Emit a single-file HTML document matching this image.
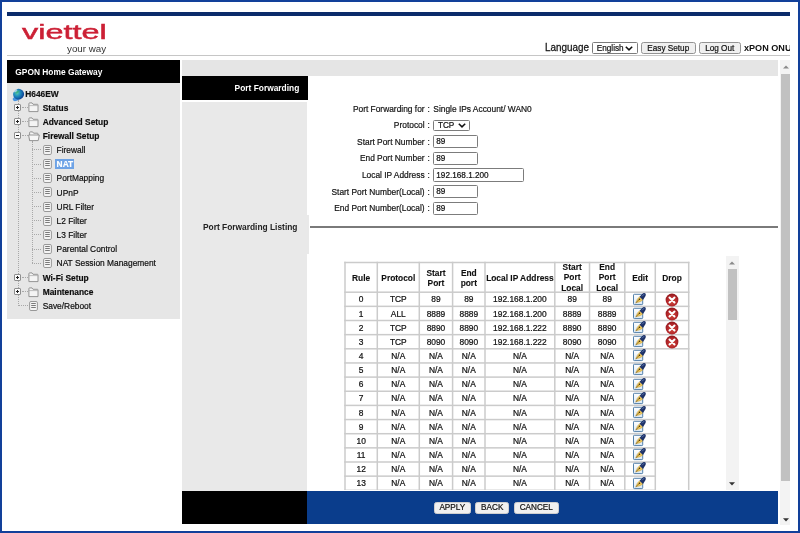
<!DOCTYPE html>
<html><head><meta charset="utf-8"><title>GPON Home Gateway</title>
<style>
html,body{margin:0;padding:0;}
body{width:800px;height:533px;position:relative;overflow:hidden;background:#fff;font-family:"Liberation Sans",sans-serif;color:#1a1a1a;}
.abs{position:absolute;}
.frame{position:absolute;left:0;top:0;width:796px;height:529px;border:2px solid #12409a;border-top-width:2px;pointer-events:none;z-index:50;}
.t{position:absolute;white-space:nowrap;line-height:1;}
.b{font-weight:bold;}
.tree .t{font-size:8.4px;-webkit-text-stroke:0.18px currentColor;transform:scaleY(1.06);}
.btn{position:absolute;box-sizing:border-box;border:1px solid #939393;border-radius:2.5px;background:#f0f0f0;font-size:8.2px;text-align:center;color:#111;white-space:nowrap;-webkit-text-stroke:0.2px #111;}
.inp{position:absolute;box-sizing:border-box;border:1px solid #7c7c7c;border-radius:1.5px;background:#fff;font-size:8.2px;color:#111;padding-left:2.5px;white-space:nowrap;-webkit-text-stroke:0.2px #111;}
.lbl{position:absolute;font-size:8.4px;white-space:nowrap;text-align:right;color:#111;line-height:10px;-webkit-text-stroke:0.18px #111;transform:scaleY(1.12);}
.cell{position:absolute;font-size:8.4px;text-align:center;white-space:nowrap;color:#111;line-height:10px;-webkit-text-stroke:0.22px #111;transform:scaleY(1.1);}
.hl{position:absolute;background:#d0d0d0;height:1.5px;}
.vl{position:absolute;background:#d0d0d0;width:1.5px;}
</style></head><body><div id="root" style="position:absolute;left:0;top:0;width:800px;height:533px;will-change:transform;">

<svg style="position:absolute;left:0;top:0" width="0" height="0"><defs><linearGradient id="eg" x1="0" y1="0" x2="0" y2="1"><stop offset="0" stop-color="#ffffff"/><stop offset="1" stop-color="#d9e8f5"/></linearGradient><radialGradient id="dg" cx="50%" cy="60%" r="55%"><stop offset="0" stop-color="#cf4a3a"/><stop offset="0.7" stop-color="#b3262a"/><stop offset="1" stop-color="#951a1e"/></radialGradient><radialGradient id="gl" cx="42%" cy="35%" r="65%"><stop offset="0" stop-color="#59c9b4"/><stop offset="0.5" stop-color="#1c86bd"/><stop offset="1" stop-color="#0d3f93"/></radialGradient></defs></svg>
<div class="abs" style="left:7px;top:12px;width:783px;height:3.5px;background:#0b2b6b"></div>
<div class="t" style="left:22px;top:21.7px;font-size:20.4px;color:#cc2035;-webkit-text-stroke:0.45px #cc2035;transform-origin:0 0;transform:scaleX(1.59);letter-spacing:0px;">viettel</div>
<div class="t" style="left:66.5px;top:44.7px;font-size:8.6px;color:#333;transform-origin:0 0;transform:scaleX(1.14);">your way</div>
<div class="abs" style="left:0;top:0;width:790px;height:60px;overflow:hidden">
<div class="t" style="left:545px;top:43.0px;font-size:9.9px;color:#161616;-webkit-text-stroke:0.25px #161616;transform:scaleY(1.1)">Language</div>
<div class="inp" style="left:592px;top:42.4px;width:45.5px;height:11.2px;line-height:9.2px;padding-left:3.8px;font-size:8.2px"><span style="position:relative;display:inline-block;transform:scaleY(1.12);top:0.7px">English</span><svg style="position:absolute;right:3.3px;top:2.3px" width="8" height="5" viewBox="0 0 8 5"><path d="M0.8 0.8 L4 3.9 L7.2 0.8" fill="none" stroke="#111" stroke-width="1.5"/></svg></div>
<div class="btn" style="left:641px;top:42.4px;width:54.5px;height:11.4px;line-height:9.4px;font-size:8.2px;"><span style="position:relative;display:inline-block;transform:scaleY(1.12);top:0.7px">Easy Setup</span></div>
<div class="btn" style="left:698.5px;top:42.4px;width:42.5px;height:11.4px;line-height:9.4px;font-size:8.2px;"><span style="position:relative;display:inline-block;transform:scaleY(1.12);top:0.7px">Log Out</span></div>
<div class="t b" style="left:744px;top:43.1px;font-size:9.9px;transform-origin:0 50%;transform:scaleX(0.92);color:#111">xPON ONU</div>
</div>
<div class="abs" style="left:7px;top:54.7px;width:783px;height:1px;background:#c6c6c6"></div>
<div class="abs" style="left:7px;top:60px;width:173px;height:23.3px;background:#000"></div>
<div class="t b" style="left:15.3px;top:67.5px;font-size:8.4px;color:#fff">GPON Home Gateway</div>
<div class="abs tree" style="left:7px;top:83.3px;width:173px;height:235.3px;background:#e6e6e6"></div>
<div class="tree">
<svg class="abs" style="left:12px;top:87.5px" width="13" height="14" viewBox="0 0 13 14"><ellipse cx="4.2" cy="10.6" rx="3.6" ry="2.2" fill="#2f86df" opacity="0.85" transform="rotate(-20 4.2 10.6)"/><ellipse cx="6.6" cy="6.2" rx="5.5" ry="5.3" fill="url(#gl)" transform="rotate(-25 6.6 6.2)"/><path d="M3.2 4.6 Q5 2.2 8 2.6 Q7.2 4.4 5.6 4.9 Q4.2 6.2 3.2 4.6Z" fill="#3bb27a" opacity="0.75"/><ellipse cx="3.6" cy="2.8" rx="2" ry="1.1" fill="#fff" opacity="0.55" transform="rotate(-35 3.6 2.8)"/></svg>
<div class="t b" style="left:25.2px;top:89.9px;color:#111">H646EW</div>
<div class="abs" style="left:17.6px;top:100px;width:0;height:205.77999999999997px;border-left:1px dotted #a8a8a8"></div>
<div class="abs" style="left:31.700000000000003px;top:140.74px;width:0;height:122.52999999999997px;border-left:1px dotted #a8a8a8"></div>
<div class="abs" style="left:21.5px;top:106.9px;height:0;width:6.5px;border-top:1px dotted #a8a8a8"></div>
<svg class="abs" style="left:14px;top:104px" width="7" height="7" viewBox="0 0 7 7"><rect x="0.5" y="0.5" width="6" height="6" rx="0.5" fill="#fbfbfb" stroke="#8f8f8f" stroke-width="1"/><path d="M2 3.5 H5" stroke="#222" stroke-width="1"/><path d="M3.5 2 V5" stroke="#222" stroke-width="1"/></svg>
<svg class="abs" style="left:27.5px;top:102.4px" width="11" height="11" viewBox="0 0 11 11"><path d="M0.9 9.6 V1.6 Q0.9 0.9 1.6 0.9 H4 L5 2.3 H9.4 Q10 2.3 10 3 V9.6 Z" fill="#f4f4f4" stroke="#8a8a8a" stroke-width="0.9"/><path d="M0.9 3.6 H10" stroke="#a5a5a5" stroke-width="0.7"/></svg>
<div class="t b" style="left:42.7px;top:103.60000000000001px;color:#0c0c0c">Status</div>
<div class="abs" style="left:21.5px;top:121.07000000000001px;height:0;width:6.5px;border-top:1px dotted #a8a8a8"></div>
<svg class="abs" style="left:14px;top:118px" width="7" height="7" viewBox="0 0 7 7"><rect x="0.5" y="0.5" width="6" height="6" rx="0.5" fill="#fbfbfb" stroke="#8f8f8f" stroke-width="1"/><path d="M2 3.5 H5" stroke="#222" stroke-width="1"/><path d="M3.5 2 V5" stroke="#222" stroke-width="1"/></svg>
<svg class="abs" style="left:27.5px;top:116.57000000000001px" width="11" height="11" viewBox="0 0 11 11"><path d="M0.9 9.6 V1.6 Q0.9 0.9 1.6 0.9 H4 L5 2.3 H9.4 Q10 2.3 10 3 V9.6 Z" fill="#f4f4f4" stroke="#8a8a8a" stroke-width="0.9"/><path d="M0.9 3.6 H10" stroke="#a5a5a5" stroke-width="0.7"/></svg>
<div class="t b" style="left:42.7px;top:117.77000000000001px;color:#0c0c0c">Advanced Setup</div>
<div class="abs" style="left:21.5px;top:135.24px;height:0;width:6.5px;border-top:1px dotted #a8a8a8"></div>
<svg class="abs" style="left:14px;top:132px" width="7" height="7" viewBox="0 0 7 7"><rect x="0.5" y="0.5" width="6" height="6" rx="0.5" fill="#fbfbfb" stroke="#8f8f8f" stroke-width="1"/><path d="M2 3.5 H5" stroke="#222" stroke-width="1"/></svg>
<svg class="abs" style="left:27.5px;top:130.74px" width="12" height="11" viewBox="0 0 12 11"><path d="M1.6 9.6 V1.6 Q1.6 0.9 2.3 0.9 H4.6 L5.6 2.2 H9.4 Q10 2.2 10 2.9 V4" fill="#f4f4f4" stroke="#8a8a8a" stroke-width="0.9"/><path d="M0.6 4 H11.3 L10.2 9.6 H1.6 Z" fill="#f7f7f7" stroke="#8a8a8a" stroke-width="0.9"/></svg>
<div class="t b" style="left:42.7px;top:131.94px;color:#0c0c0c">Firewall Setup</div>
<div class="abs" style="left:32.2px;top:149.41px;height:0;width:9.299999999999997px;border-top:1px dotted #a8a8a8"></div>
<svg class="abs" style="left:42.5px;top:145px" width="9" height="10" viewBox="0 0 9 10"><rect x="0.6" y="0.5" width="7.8" height="9" rx="1.3" fill="#f4f4f4" stroke="#8e8e8e" stroke-width="0.9"/><path d="M2.2 2.5 H6.8 M2.2 4.5 H6.8 M2.2 6.5 H6.8" stroke="#7a7a7a" stroke-width="1"/></svg>
<div class="t" style="left:56.6px;top:146.10999999999999px;color:#0c0c0c">Firewall</div>
<div class="abs" style="left:32.2px;top:163.58px;height:0;width:9.299999999999997px;border-top:1px dotted #a8a8a8"></div>
<svg class="abs" style="left:42.5px;top:159px" width="9" height="10" viewBox="0 0 9 10"><rect x="0.6" y="0.5" width="7.8" height="9" rx="1.3" fill="#f4f4f4" stroke="#8e8e8e" stroke-width="0.9"/><path d="M2.2 2.5 H6.8 M2.2 4.5 H6.8 M2.2 6.5 H6.8" stroke="#7a7a7a" stroke-width="1"/></svg>
<div class="abs" style="left:54.7px;top:159.08px;width:19.4px;height:10px;background:#6ea3e6"></div>
<div class="t b" style="left:56.6px;top:160.28px;color:#fff">NAT</div>
<div class="abs" style="left:32.2px;top:177.75px;height:0;width:9.299999999999997px;border-top:1px dotted #a8a8a8"></div>
<svg class="abs" style="left:42.5px;top:173px" width="9" height="10" viewBox="0 0 9 10"><rect x="0.6" y="0.5" width="7.8" height="9" rx="1.3" fill="#f4f4f4" stroke="#8e8e8e" stroke-width="0.9"/><path d="M2.2 2.5 H6.8 M2.2 4.5 H6.8 M2.2 6.5 H6.8" stroke="#7a7a7a" stroke-width="1"/></svg>
<div class="t" style="left:56.6px;top:174.45px;color:#0c0c0c">PortMapping</div>
<div class="abs" style="left:32.2px;top:191.92000000000002px;height:0;width:9.299999999999997px;border-top:1px dotted #a8a8a8"></div>
<svg class="abs" style="left:42.5px;top:187px" width="9" height="10" viewBox="0 0 9 10"><rect x="0.6" y="0.5" width="7.8" height="9" rx="1.3" fill="#f4f4f4" stroke="#8e8e8e" stroke-width="0.9"/><path d="M2.2 2.5 H6.8 M2.2 4.5 H6.8 M2.2 6.5 H6.8" stroke="#7a7a7a" stroke-width="1"/></svg>
<div class="t" style="left:56.6px;top:188.62px;color:#0c0c0c">UPnP</div>
<div class="abs" style="left:32.2px;top:206.09px;height:0;width:9.299999999999997px;border-top:1px dotted #a8a8a8"></div>
<svg class="abs" style="left:42.5px;top:202px" width="9" height="10" viewBox="0 0 9 10"><rect x="0.6" y="0.5" width="7.8" height="9" rx="1.3" fill="#f4f4f4" stroke="#8e8e8e" stroke-width="0.9"/><path d="M2.2 2.5 H6.8 M2.2 4.5 H6.8 M2.2 6.5 H6.8" stroke="#7a7a7a" stroke-width="1"/></svg>
<div class="t" style="left:56.6px;top:202.79px;color:#0c0c0c">URL Filter</div>
<div class="abs" style="left:32.2px;top:220.26px;height:0;width:9.299999999999997px;border-top:1px dotted #a8a8a8"></div>
<svg class="abs" style="left:42.5px;top:216px" width="9" height="10" viewBox="0 0 9 10"><rect x="0.6" y="0.5" width="7.8" height="9" rx="1.3" fill="#f4f4f4" stroke="#8e8e8e" stroke-width="0.9"/><path d="M2.2 2.5 H6.8 M2.2 4.5 H6.8 M2.2 6.5 H6.8" stroke="#7a7a7a" stroke-width="1"/></svg>
<div class="t" style="left:56.6px;top:216.95999999999998px;color:#0c0c0c">L2 Filter</div>
<div class="abs" style="left:32.2px;top:234.43px;height:0;width:9.299999999999997px;border-top:1px dotted #a8a8a8"></div>
<svg class="abs" style="left:42.5px;top:230px" width="9" height="10" viewBox="0 0 9 10"><rect x="0.6" y="0.5" width="7.8" height="9" rx="1.3" fill="#f4f4f4" stroke="#8e8e8e" stroke-width="0.9"/><path d="M2.2 2.5 H6.8 M2.2 4.5 H6.8 M2.2 6.5 H6.8" stroke="#7a7a7a" stroke-width="1"/></svg>
<div class="t" style="left:56.6px;top:231.13px;color:#0c0c0c">L3 Filter</div>
<div class="abs" style="left:32.2px;top:248.6px;height:0;width:9.299999999999997px;border-top:1px dotted #a8a8a8"></div>
<svg class="abs" style="left:42.5px;top:244px" width="9" height="10" viewBox="0 0 9 10"><rect x="0.6" y="0.5" width="7.8" height="9" rx="1.3" fill="#f4f4f4" stroke="#8e8e8e" stroke-width="0.9"/><path d="M2.2 2.5 H6.8 M2.2 4.5 H6.8 M2.2 6.5 H6.8" stroke="#7a7a7a" stroke-width="1"/></svg>
<div class="t" style="left:56.6px;top:245.29999999999998px;color:#0c0c0c">Parental Control</div>
<div class="abs" style="left:32.2px;top:262.77px;height:0;width:9.299999999999997px;border-top:1px dotted #a8a8a8"></div>
<svg class="abs" style="left:42.5px;top:258px" width="9" height="10" viewBox="0 0 9 10"><rect x="0.6" y="0.5" width="7.8" height="9" rx="1.3" fill="#f4f4f4" stroke="#8e8e8e" stroke-width="0.9"/><path d="M2.2 2.5 H6.8 M2.2 4.5 H6.8 M2.2 6.5 H6.8" stroke="#7a7a7a" stroke-width="1"/></svg>
<div class="t" style="left:56.6px;top:259.46999999999997px;color:#0c0c0c">NAT Session Management</div>
<div class="abs" style="left:21.5px;top:276.94px;height:0;width:6.5px;border-top:1px dotted #a8a8a8"></div>
<svg class="abs" style="left:14px;top:274px" width="7" height="7" viewBox="0 0 7 7"><rect x="0.5" y="0.5" width="6" height="6" rx="0.5" fill="#fbfbfb" stroke="#8f8f8f" stroke-width="1"/><path d="M2 3.5 H5" stroke="#222" stroke-width="1"/><path d="M3.5 2 V5" stroke="#222" stroke-width="1"/></svg>
<svg class="abs" style="left:27.5px;top:272.44px" width="11" height="11" viewBox="0 0 11 11"><path d="M0.9 9.6 V1.6 Q0.9 0.9 1.6 0.9 H4 L5 2.3 H9.4 Q10 2.3 10 3 V9.6 Z" fill="#f4f4f4" stroke="#8a8a8a" stroke-width="0.9"/><path d="M0.9 3.6 H10" stroke="#a5a5a5" stroke-width="0.7"/></svg>
<div class="t b" style="left:42.7px;top:273.64px;color:#0c0c0c">Wi-Fi Setup</div>
<div class="abs" style="left:21.5px;top:291.11px;height:0;width:6.5px;border-top:1px dotted #a8a8a8"></div>
<svg class="abs" style="left:14px;top:288px" width="7" height="7" viewBox="0 0 7 7"><rect x="0.5" y="0.5" width="6" height="6" rx="0.5" fill="#fbfbfb" stroke="#8f8f8f" stroke-width="1"/><path d="M2 3.5 H5" stroke="#222" stroke-width="1"/><path d="M3.5 2 V5" stroke="#222" stroke-width="1"/></svg>
<svg class="abs" style="left:27.5px;top:286.61px" width="11" height="11" viewBox="0 0 11 11"><path d="M0.9 9.6 V1.6 Q0.9 0.9 1.6 0.9 H4 L5 2.3 H9.4 Q10 2.3 10 3 V9.6 Z" fill="#f4f4f4" stroke="#8a8a8a" stroke-width="0.9"/><path d="M0.9 3.6 H10" stroke="#a5a5a5" stroke-width="0.7"/></svg>
<div class="t b" style="left:42.7px;top:287.81px;color:#0c0c0c">Maintenance</div>
<div class="abs" style="left:18.1px;top:305.28px;height:0;width:9.899999999999999px;border-top:1px dotted #a8a8a8"></div>
<svg class="abs" style="left:28.5px;top:301px" width="9" height="10" viewBox="0 0 9 10"><rect x="0.6" y="0.5" width="7.8" height="9" rx="1.3" fill="#f4f4f4" stroke="#8e8e8e" stroke-width="0.9"/><path d="M2.2 2.5 H6.8 M2.2 4.5 H6.8 M2.2 6.5 H6.8" stroke="#7a7a7a" stroke-width="1"/></svg>
<div class="t" style="left:42.7px;top:301.97999999999996px;color:#0c0c0c">Save/Reboot</div>
</div>
<div class="abs" style="left:182px;top:60px;width:596px;height:15.8px;background:#e5e5e5"></div>
<div class="abs" style="left:182px;top:76px;width:125.5px;height:23.7px;background:#000"></div>
<div class="t b" style="left:182px;width:117.3px;text-align:right;top:83.6px;font-size:8.4px;color:#fff">Port Forwarding</div>
<div class="abs" style="left:182px;top:101.5px;width:125.2px;height:389.5px;background:#e9e9e9"></div>
<div class="abs" style="left:182px;top:215px;width:127.3px;height:39px;background:#e9e9e9"></div>
<div class="t b" style="left:203px;top:222.7px;font-size:8.4px;color:#222">Port Forwarding Listing</div>
<div class="abs" style="left:310px;top:226.3px;width:468px;height:1.5px;background:#7a7a7a"></div>
<div class="lbl" style="left:324.6px;width:100px;top:103.6px">Port Forwarding for</div>
<div class="lbl" style="left:427.6px;top:103.6px">:</div>
<div class="lbl" style="left:324.6px;width:100px;top:120.1px">Protocol</div>
<div class="lbl" style="left:427.6px;top:120.1px">:</div>
<div class="lbl" style="left:324.6px;width:100px;top:136.79999999999998px">Start Port Number</div>
<div class="lbl" style="left:427.6px;top:136.79999999999998px">:</div>
<div class="lbl" style="left:324.6px;width:100px;top:153.4px">End Port Number</div>
<div class="lbl" style="left:427.6px;top:153.4px">:</div>
<div class="lbl" style="left:324.6px;width:100px;top:170.1px">Local IP Address</div>
<div class="lbl" style="left:427.6px;top:170.1px">:</div>
<div class="lbl" style="left:324.6px;width:100px;top:186.79999999999998px">Start Port Number(Local)</div>
<div class="lbl" style="left:427.6px;top:186.79999999999998px">:</div>
<div class="lbl" style="left:324.6px;width:100px;top:203.4px">End Port Number(Local)</div>
<div class="lbl" style="left:427.6px;top:203.4px">:</div>
<div class="lbl" style="left:433.3px;top:103.6px;font-size:8.4px">Single IPs Account/ WAN0</div>
<div class="inp" style="left:433.3px;top:119.6px;width:37px;height:11.5px;line-height:9.5px;padding-left:3.6px;font-size:8.2px"><span style="position:relative;display:inline-block;transform:scaleY(1.12);top:0.4px">TCP</span><svg style="position:absolute;right:3.3px;top:2.45px" width="8" height="5" viewBox="0 0 8 5"><path d="M0.8 0.8 L4 3.9 L7.2 0.8" fill="none" stroke="#111" stroke-width="1.5"/></svg></div>
<div class="inp" style="left:433.3px;top:135.1px;width:44.8px;height:13.2px;line-height:11.2px;padding-left:2.0px;font-size:8.2px"><span style="position:relative;display:inline-block;transform:scaleY(1.12);top:0.4px">89</span></div>
<div class="inp" style="left:433.3px;top:151.7px;width:44.8px;height:13.2px;line-height:11.2px;padding-left:2.0px;font-size:8.2px"><span style="position:relative;display:inline-block;transform:scaleY(1.12);top:0.4px">89</span></div>
<div class="inp" style="left:433.3px;top:185.1px;width:44.8px;height:13.2px;line-height:11.2px;padding-left:2.0px;font-size:8.2px"><span style="position:relative;display:inline-block;transform:scaleY(1.12);top:0.4px">89</span></div>
<div class="inp" style="left:433.3px;top:201.7px;width:44.8px;height:13.2px;line-height:11.2px;padding-left:2.0px;font-size:8.2px"><span style="position:relative;display:inline-block;transform:scaleY(1.12);top:0.4px">89</span></div>
<div class="inp" style="left:433.3px;top:168.4px;width:90.6px;height:13.2px;line-height:11.2px;padding-left:2.0px;font-size:8.2px"><span style="position:relative;display:inline-block;transform:scaleY(1.12);top:0.4px">192.168.1.200</span></div>
<div class="abs" style="left:310px;top:230px;width:430px;height:260.3px;overflow:hidden">
<svg class="abs" style="left:0;top:0" width="430" height="262" viewBox="0 0 430 262" shape-rendering="geometricPrecision"><rect x="34.25" y="31.75" width="345.20" height="1.5" fill="#cbcbcb"/><rect x="34.25" y="61.45" width="345.20" height="1.5" fill="#cbcbcb"/><rect x="34.25" y="75.60" width="345.20" height="1.5" fill="#cbcbcb"/><rect x="34.25" y="89.75" width="345.20" height="1.5" fill="#cbcbcb"/><rect x="34.25" y="103.90" width="345.20" height="1.5" fill="#cbcbcb"/><rect x="34.25" y="118.05" width="345.20" height="1.5" fill="#cbcbcb"/><rect x="34.25" y="132.20" width="311.80" height="1.5" fill="#cbcbcb"/><rect x="34.25" y="146.35" width="311.80" height="1.5" fill="#cbcbcb"/><rect x="34.25" y="160.50" width="311.80" height="1.5" fill="#cbcbcb"/><rect x="34.25" y="174.65" width="311.80" height="1.5" fill="#cbcbcb"/><rect x="34.25" y="188.80" width="311.80" height="1.5" fill="#cbcbcb"/><rect x="34.25" y="202.95" width="311.80" height="1.5" fill="#cbcbcb"/><rect x="34.25" y="217.10" width="311.80" height="1.5" fill="#cbcbcb"/><rect x="34.25" y="231.25" width="311.80" height="1.5" fill="#cbcbcb"/><rect x="34.25" y="245.40" width="311.80" height="1.5" fill="#cbcbcb"/><rect x="34.25" y="259.55" width="311.80" height="1.5" fill="#cbcbcb"/><rect x="34.25" y="273.70" width="311.80" height="1.5" fill="#cbcbcb"/><rect x="34.25" y="31.75" width="1.5" height="301.50" fill="#cbcbcb"/><rect x="66.55" y="31.75" width="1.5" height="301.50" fill="#cbcbcb"/><rect x="108.55" y="31.75" width="1.5" height="301.50" fill="#cbcbcb"/><rect x="141.85" y="31.75" width="1.5" height="301.50" fill="#cbcbcb"/><rect x="174.25" y="31.75" width="1.5" height="301.50" fill="#cbcbcb"/><rect x="244.05" y="31.75" width="1.5" height="301.50" fill="#cbcbcb"/><rect x="278.75" y="31.75" width="1.5" height="301.50" fill="#cbcbcb"/><rect x="314.05" y="31.75" width="1.5" height="301.50" fill="#cbcbcb"/><rect x="344.55" y="31.75" width="1.5" height="301.50" fill="#cbcbcb"/><rect x="377.95" y="31.75" width="1.5" height="301.50" fill="#cbcbcb"/></svg>
<div class="cell b" style="-webkit-text-stroke-width:0.1px;left:35.0px;width:32.30000000000001px;top:43.62500000000002px;line-height:9.45px;font-size:8.4px">Rule</div>
<div class="cell b" style="-webkit-text-stroke-width:0.1px;left:67.30000000000001px;width:42.0px;top:43.62500000000002px;line-height:9.45px;font-size:8.4px">Protocol</div>
<div class="cell b" style="-webkit-text-stroke-width:0.1px;left:109.30000000000001px;width:33.30000000000001px;top:38.90000000000002px;line-height:9.45px;font-size:8.4px">Start<br>Port</div>
<div class="cell b" style="-webkit-text-stroke-width:0.1px;left:142.60000000000002px;width:32.39999999999998px;top:38.90000000000002px;line-height:9.45px;font-size:8.4px">End<br>port</div>
<div class="cell b" style="-webkit-text-stroke-width:0.1px;left:175.0px;width:69.79999999999995px;top:43.62500000000002px;line-height:9.45px;font-size:8.4px">Local IP Address</div>
<div class="cell b" style="-webkit-text-stroke-width:0.1px;left:244.79999999999995px;width:34.700000000000045px;top:34.175000000000026px;line-height:9.45px;font-size:8.4px">Start<br>Port<br>Local</div>
<div class="cell b" style="-webkit-text-stroke-width:0.1px;left:279.5px;width:35.299999999999955px;top:34.175000000000026px;line-height:9.45px;font-size:8.4px">End<br>Port<br>Local</div>
<div class="cell b" style="-webkit-text-stroke-width:0.1px;left:314.79999999999995px;width:30.5px;top:43.62500000000002px;line-height:9.45px;font-size:8.4px">Edit</div>
<div class="cell b" style="-webkit-text-stroke-width:0.1px;left:345.29999999999995px;width:33.40000000000009px;top:43.62500000000002px;line-height:9.45px;font-size:8.4px">Drop</div>
<div class="cell" style="left:35.0px;width:32.30000000000001px;top:64.37499999999997px">0</div>
<div class="cell" style="left:67.30000000000001px;width:42.0px;top:64.37499999999997px">TCP</div>
<div class="cell" style="left:109.30000000000001px;width:33.30000000000001px;top:64.37499999999997px">89</div>
<div class="cell" style="left:142.60000000000002px;width:32.39999999999998px;top:64.37499999999997px">89</div>
<div class="cell" style="left:175.0px;width:69.79999999999995px;top:64.37499999999997px">192.168.1.200</div>
<div class="cell" style="left:244.79999999999995px;width:34.700000000000045px;top:64.37499999999997px">89</div>
<div class="cell" style="left:279.5px;width:35.299999999999955px;top:64.37499999999997px">89</div>
<svg class="abs" style="left:322px;top:61.67px" width="15" height="14" viewBox="0 0 15 14"><rect x="1.5" y="2.3" width="9.2" height="10.3" rx="0.8" fill="url(#eg)" stroke="#4a79a6" stroke-width="0.95"/><path d="M3.7 10.9 Q4.9 6.6 7.6 4.7 L11 8.1 Q8.7 10.1 3.7 10.9 Z" fill="#f0c95c" stroke="#a8822a" stroke-width="0.35"/><path d="M3.8 10.8 L7.4 7.3" stroke="#5a4310" stroke-width="0.6"/><circle cx="7.5" cy="7.3" r="0.75" fill="#3f2e0a"/><path d="M7.6 4.7 L10.9 1.3 Q12.6 0.5 13.5 1.4 Q14.2 2.6 13.5 3.9 L11 8.1 Z" fill="#1d3166"/><path d="M10.1 4.3 L12.2 2.1" stroke="#6484c4" stroke-width="0.8"/></svg>
<svg class="abs" style="left:354.8px;top:62.77px" width="14" height="14" viewBox="0 0 14 14"><circle cx="7" cy="7" r="6.4" fill="url(#dg)"/><path d="M4.5 4.5 L9.5 9.5 M9.5 4.5 L4.5 9.5" stroke="#fff" stroke-width="2.0" stroke-linecap="round"/></svg>
<div class="cell" style="left:35.0px;width:32.30000000000001px;top:78.52499999999995px">1</div>
<div class="cell" style="left:67.30000000000001px;width:42.0px;top:78.52499999999995px">ALL</div>
<div class="cell" style="left:109.30000000000001px;width:33.30000000000001px;top:78.52499999999995px">8889</div>
<div class="cell" style="left:142.60000000000002px;width:32.39999999999998px;top:78.52499999999995px">8889</div>
<div class="cell" style="left:175.0px;width:69.79999999999995px;top:78.52499999999995px">192.168.1.200</div>
<div class="cell" style="left:244.79999999999995px;width:34.700000000000045px;top:78.52499999999995px">8889</div>
<div class="cell" style="left:279.5px;width:35.299999999999955px;top:78.52499999999995px">8889</div>
<svg class="abs" style="left:322px;top:75.82px" width="15" height="14" viewBox="0 0 15 14"><rect x="1.5" y="2.3" width="9.2" height="10.3" rx="0.8" fill="url(#eg)" stroke="#4a79a6" stroke-width="0.95"/><path d="M3.7 10.9 Q4.9 6.6 7.6 4.7 L11 8.1 Q8.7 10.1 3.7 10.9 Z" fill="#f0c95c" stroke="#a8822a" stroke-width="0.35"/><path d="M3.8 10.8 L7.4 7.3" stroke="#5a4310" stroke-width="0.6"/><circle cx="7.5" cy="7.3" r="0.75" fill="#3f2e0a"/><path d="M7.6 4.7 L10.9 1.3 Q12.6 0.5 13.5 1.4 Q14.2 2.6 13.5 3.9 L11 8.1 Z" fill="#1d3166"/><path d="M10.1 4.3 L12.2 2.1" stroke="#6484c4" stroke-width="0.8"/></svg>
<svg class="abs" style="left:354.8px;top:76.92px" width="14" height="14" viewBox="0 0 14 14"><circle cx="7" cy="7" r="6.4" fill="url(#dg)"/><path d="M4.5 4.5 L9.5 9.5 M9.5 4.5 L4.5 9.5" stroke="#fff" stroke-width="2.0" stroke-linecap="round"/></svg>
<div class="cell" style="left:35.0px;width:32.30000000000001px;top:92.67499999999998px">2</div>
<div class="cell" style="left:67.30000000000001px;width:42.0px;top:92.67499999999998px">TCP</div>
<div class="cell" style="left:109.30000000000001px;width:33.30000000000001px;top:92.67499999999998px">8890</div>
<div class="cell" style="left:142.60000000000002px;width:32.39999999999998px;top:92.67499999999998px">8890</div>
<div class="cell" style="left:175.0px;width:69.79999999999995px;top:92.67499999999998px">192.168.1.222</div>
<div class="cell" style="left:244.79999999999995px;width:34.700000000000045px;top:92.67499999999998px">8890</div>
<div class="cell" style="left:279.5px;width:35.299999999999955px;top:92.67499999999998px">8890</div>
<svg class="abs" style="left:322px;top:89.97px" width="15" height="14" viewBox="0 0 15 14"><rect x="1.5" y="2.3" width="9.2" height="10.3" rx="0.8" fill="url(#eg)" stroke="#4a79a6" stroke-width="0.95"/><path d="M3.7 10.9 Q4.9 6.6 7.6 4.7 L11 8.1 Q8.7 10.1 3.7 10.9 Z" fill="#f0c95c" stroke="#a8822a" stroke-width="0.35"/><path d="M3.8 10.8 L7.4 7.3" stroke="#5a4310" stroke-width="0.6"/><circle cx="7.5" cy="7.3" r="0.75" fill="#3f2e0a"/><path d="M7.6 4.7 L10.9 1.3 Q12.6 0.5 13.5 1.4 Q14.2 2.6 13.5 3.9 L11 8.1 Z" fill="#1d3166"/><path d="M10.1 4.3 L12.2 2.1" stroke="#6484c4" stroke-width="0.8"/></svg>
<svg class="abs" style="left:354.8px;top:91.07px" width="14" height="14" viewBox="0 0 14 14"><circle cx="7" cy="7" r="6.4" fill="url(#dg)"/><path d="M4.5 4.5 L9.5 9.5 M9.5 4.5 L4.5 9.5" stroke="#fff" stroke-width="2.0" stroke-linecap="round"/></svg>
<div class="cell" style="left:35.0px;width:32.30000000000001px;top:106.82499999999996px">3</div>
<div class="cell" style="left:67.30000000000001px;width:42.0px;top:106.82499999999996px">TCP</div>
<div class="cell" style="left:109.30000000000001px;width:33.30000000000001px;top:106.82499999999996px">8090</div>
<div class="cell" style="left:142.60000000000002px;width:32.39999999999998px;top:106.82499999999996px">8090</div>
<div class="cell" style="left:175.0px;width:69.79999999999995px;top:106.82499999999996px">192.168.1.222</div>
<div class="cell" style="left:244.79999999999995px;width:34.700000000000045px;top:106.82499999999996px">8090</div>
<div class="cell" style="left:279.5px;width:35.299999999999955px;top:106.82499999999996px">8090</div>
<svg class="abs" style="left:322px;top:104.12px" width="15" height="14" viewBox="0 0 15 14"><rect x="1.5" y="2.3" width="9.2" height="10.3" rx="0.8" fill="url(#eg)" stroke="#4a79a6" stroke-width="0.95"/><path d="M3.7 10.9 Q4.9 6.6 7.6 4.7 L11 8.1 Q8.7 10.1 3.7 10.9 Z" fill="#f0c95c" stroke="#a8822a" stroke-width="0.35"/><path d="M3.8 10.8 L7.4 7.3" stroke="#5a4310" stroke-width="0.6"/><circle cx="7.5" cy="7.3" r="0.75" fill="#3f2e0a"/><path d="M7.6 4.7 L10.9 1.3 Q12.6 0.5 13.5 1.4 Q14.2 2.6 13.5 3.9 L11 8.1 Z" fill="#1d3166"/><path d="M10.1 4.3 L12.2 2.1" stroke="#6484c4" stroke-width="0.8"/></svg>
<svg class="abs" style="left:354.8px;top:105.22px" width="14" height="14" viewBox="0 0 14 14"><circle cx="7" cy="7" r="6.4" fill="url(#dg)"/><path d="M4.5 4.5 L9.5 9.5 M9.5 4.5 L4.5 9.5" stroke="#fff" stroke-width="2.0" stroke-linecap="round"/></svg>
<div class="cell" style="left:35.0px;width:32.30000000000001px;top:120.975px">4</div>
<div class="cell" style="left:67.30000000000001px;width:42.0px;top:120.975px">N/A</div>
<div class="cell" style="left:109.30000000000001px;width:33.30000000000001px;top:120.975px">N/A</div>
<div class="cell" style="left:142.60000000000002px;width:32.39999999999998px;top:120.975px">N/A</div>
<div class="cell" style="left:175.0px;width:69.79999999999995px;top:120.975px">N/A</div>
<div class="cell" style="left:244.79999999999995px;width:34.700000000000045px;top:120.975px">N/A</div>
<div class="cell" style="left:279.5px;width:35.299999999999955px;top:120.975px">N/A</div>
<svg class="abs" style="left:322px;top:118.28px" width="15" height="14" viewBox="0 0 15 14"><rect x="1.5" y="2.3" width="9.2" height="10.3" rx="0.8" fill="url(#eg)" stroke="#4a79a6" stroke-width="0.95"/><path d="M3.7 10.9 Q4.9 6.6 7.6 4.7 L11 8.1 Q8.7 10.1 3.7 10.9 Z" fill="#f0c95c" stroke="#a8822a" stroke-width="0.35"/><path d="M3.8 10.8 L7.4 7.3" stroke="#5a4310" stroke-width="0.6"/><circle cx="7.5" cy="7.3" r="0.75" fill="#3f2e0a"/><path d="M7.6 4.7 L10.9 1.3 Q12.6 0.5 13.5 1.4 Q14.2 2.6 13.5 3.9 L11 8.1 Z" fill="#1d3166"/><path d="M10.1 4.3 L12.2 2.1" stroke="#6484c4" stroke-width="0.8"/></svg>
<div class="cell" style="left:35.0px;width:32.30000000000001px;top:135.12499999999997px">5</div>
<div class="cell" style="left:67.30000000000001px;width:42.0px;top:135.12499999999997px">N/A</div>
<div class="cell" style="left:109.30000000000001px;width:33.30000000000001px;top:135.12499999999997px">N/A</div>
<div class="cell" style="left:142.60000000000002px;width:32.39999999999998px;top:135.12499999999997px">N/A</div>
<div class="cell" style="left:175.0px;width:69.79999999999995px;top:135.12499999999997px">N/A</div>
<div class="cell" style="left:244.79999999999995px;width:34.700000000000045px;top:135.12499999999997px">N/A</div>
<div class="cell" style="left:279.5px;width:35.299999999999955px;top:135.12499999999997px">N/A</div>
<svg class="abs" style="left:322px;top:132.42px" width="15" height="14" viewBox="0 0 15 14"><rect x="1.5" y="2.3" width="9.2" height="10.3" rx="0.8" fill="url(#eg)" stroke="#4a79a6" stroke-width="0.95"/><path d="M3.7 10.9 Q4.9 6.6 7.6 4.7 L11 8.1 Q8.7 10.1 3.7 10.9 Z" fill="#f0c95c" stroke="#a8822a" stroke-width="0.35"/><path d="M3.8 10.8 L7.4 7.3" stroke="#5a4310" stroke-width="0.6"/><circle cx="7.5" cy="7.3" r="0.75" fill="#3f2e0a"/><path d="M7.6 4.7 L10.9 1.3 Q12.6 0.5 13.5 1.4 Q14.2 2.6 13.5 3.9 L11 8.1 Z" fill="#1d3166"/><path d="M10.1 4.3 L12.2 2.1" stroke="#6484c4" stroke-width="0.8"/></svg>
<div class="cell" style="left:35.0px;width:32.30000000000001px;top:149.275px">6</div>
<div class="cell" style="left:67.30000000000001px;width:42.0px;top:149.275px">N/A</div>
<div class="cell" style="left:109.30000000000001px;width:33.30000000000001px;top:149.275px">N/A</div>
<div class="cell" style="left:142.60000000000002px;width:32.39999999999998px;top:149.275px">N/A</div>
<div class="cell" style="left:175.0px;width:69.79999999999995px;top:149.275px">N/A</div>
<div class="cell" style="left:244.79999999999995px;width:34.700000000000045px;top:149.275px">N/A</div>
<div class="cell" style="left:279.5px;width:35.299999999999955px;top:149.275px">N/A</div>
<svg class="abs" style="left:322px;top:146.58px" width="15" height="14" viewBox="0 0 15 14"><rect x="1.5" y="2.3" width="9.2" height="10.3" rx="0.8" fill="url(#eg)" stroke="#4a79a6" stroke-width="0.95"/><path d="M3.7 10.9 Q4.9 6.6 7.6 4.7 L11 8.1 Q8.7 10.1 3.7 10.9 Z" fill="#f0c95c" stroke="#a8822a" stroke-width="0.35"/><path d="M3.8 10.8 L7.4 7.3" stroke="#5a4310" stroke-width="0.6"/><circle cx="7.5" cy="7.3" r="0.75" fill="#3f2e0a"/><path d="M7.6 4.7 L10.9 1.3 Q12.6 0.5 13.5 1.4 Q14.2 2.6 13.5 3.9 L11 8.1 Z" fill="#1d3166"/><path d="M10.1 4.3 L12.2 2.1" stroke="#6484c4" stroke-width="0.8"/></svg>
<div class="cell" style="left:35.0px;width:32.30000000000001px;top:163.42499999999998px">7</div>
<div class="cell" style="left:67.30000000000001px;width:42.0px;top:163.42499999999998px">N/A</div>
<div class="cell" style="left:109.30000000000001px;width:33.30000000000001px;top:163.42499999999998px">N/A</div>
<div class="cell" style="left:142.60000000000002px;width:32.39999999999998px;top:163.42499999999998px">N/A</div>
<div class="cell" style="left:175.0px;width:69.79999999999995px;top:163.42499999999998px">N/A</div>
<div class="cell" style="left:244.79999999999995px;width:34.700000000000045px;top:163.42499999999998px">N/A</div>
<div class="cell" style="left:279.5px;width:35.299999999999955px;top:163.42499999999998px">N/A</div>
<svg class="abs" style="left:322px;top:160.72px" width="15" height="14" viewBox="0 0 15 14"><rect x="1.5" y="2.3" width="9.2" height="10.3" rx="0.8" fill="url(#eg)" stroke="#4a79a6" stroke-width="0.95"/><path d="M3.7 10.9 Q4.9 6.6 7.6 4.7 L11 8.1 Q8.7 10.1 3.7 10.9 Z" fill="#f0c95c" stroke="#a8822a" stroke-width="0.35"/><path d="M3.8 10.8 L7.4 7.3" stroke="#5a4310" stroke-width="0.6"/><circle cx="7.5" cy="7.3" r="0.75" fill="#3f2e0a"/><path d="M7.6 4.7 L10.9 1.3 Q12.6 0.5 13.5 1.4 Q14.2 2.6 13.5 3.9 L11 8.1 Z" fill="#1d3166"/><path d="M10.1 4.3 L12.2 2.1" stroke="#6484c4" stroke-width="0.8"/></svg>
<div class="cell" style="left:35.0px;width:32.30000000000001px;top:177.57499999999996px">8</div>
<div class="cell" style="left:67.30000000000001px;width:42.0px;top:177.57499999999996px">N/A</div>
<div class="cell" style="left:109.30000000000001px;width:33.30000000000001px;top:177.57499999999996px">N/A</div>
<div class="cell" style="left:142.60000000000002px;width:32.39999999999998px;top:177.57499999999996px">N/A</div>
<div class="cell" style="left:175.0px;width:69.79999999999995px;top:177.57499999999996px">N/A</div>
<div class="cell" style="left:244.79999999999995px;width:34.700000000000045px;top:177.57499999999996px">N/A</div>
<div class="cell" style="left:279.5px;width:35.299999999999955px;top:177.57499999999996px">N/A</div>
<svg class="abs" style="left:322px;top:174.87px" width="15" height="14" viewBox="0 0 15 14"><rect x="1.5" y="2.3" width="9.2" height="10.3" rx="0.8" fill="url(#eg)" stroke="#4a79a6" stroke-width="0.95"/><path d="M3.7 10.9 Q4.9 6.6 7.6 4.7 L11 8.1 Q8.7 10.1 3.7 10.9 Z" fill="#f0c95c" stroke="#a8822a" stroke-width="0.35"/><path d="M3.8 10.8 L7.4 7.3" stroke="#5a4310" stroke-width="0.6"/><circle cx="7.5" cy="7.3" r="0.75" fill="#3f2e0a"/><path d="M7.6 4.7 L10.9 1.3 Q12.6 0.5 13.5 1.4 Q14.2 2.6 13.5 3.9 L11 8.1 Z" fill="#1d3166"/><path d="M10.1 4.3 L12.2 2.1" stroke="#6484c4" stroke-width="0.8"/></svg>
<div class="cell" style="left:35.0px;width:32.30000000000001px;top:191.725px">9</div>
<div class="cell" style="left:67.30000000000001px;width:42.0px;top:191.725px">N/A</div>
<div class="cell" style="left:109.30000000000001px;width:33.30000000000001px;top:191.725px">N/A</div>
<div class="cell" style="left:142.60000000000002px;width:32.39999999999998px;top:191.725px">N/A</div>
<div class="cell" style="left:175.0px;width:69.79999999999995px;top:191.725px">N/A</div>
<div class="cell" style="left:244.79999999999995px;width:34.700000000000045px;top:191.725px">N/A</div>
<div class="cell" style="left:279.5px;width:35.299999999999955px;top:191.725px">N/A</div>
<svg class="abs" style="left:322px;top:189.03px" width="15" height="14" viewBox="0 0 15 14"><rect x="1.5" y="2.3" width="9.2" height="10.3" rx="0.8" fill="url(#eg)" stroke="#4a79a6" stroke-width="0.95"/><path d="M3.7 10.9 Q4.9 6.6 7.6 4.7 L11 8.1 Q8.7 10.1 3.7 10.9 Z" fill="#f0c95c" stroke="#a8822a" stroke-width="0.35"/><path d="M3.8 10.8 L7.4 7.3" stroke="#5a4310" stroke-width="0.6"/><circle cx="7.5" cy="7.3" r="0.75" fill="#3f2e0a"/><path d="M7.6 4.7 L10.9 1.3 Q12.6 0.5 13.5 1.4 Q14.2 2.6 13.5 3.9 L11 8.1 Z" fill="#1d3166"/><path d="M10.1 4.3 L12.2 2.1" stroke="#6484c4" stroke-width="0.8"/></svg>
<div class="cell" style="left:35.0px;width:32.30000000000001px;top:205.87499999999997px">10</div>
<div class="cell" style="left:67.30000000000001px;width:42.0px;top:205.87499999999997px">N/A</div>
<div class="cell" style="left:109.30000000000001px;width:33.30000000000001px;top:205.87499999999997px">N/A</div>
<div class="cell" style="left:142.60000000000002px;width:32.39999999999998px;top:205.87499999999997px">N/A</div>
<div class="cell" style="left:175.0px;width:69.79999999999995px;top:205.87499999999997px">N/A</div>
<div class="cell" style="left:244.79999999999995px;width:34.700000000000045px;top:205.87499999999997px">N/A</div>
<div class="cell" style="left:279.5px;width:35.299999999999955px;top:205.87499999999997px">N/A</div>
<svg class="abs" style="left:322px;top:203.17px" width="15" height="14" viewBox="0 0 15 14"><rect x="1.5" y="2.3" width="9.2" height="10.3" rx="0.8" fill="url(#eg)" stroke="#4a79a6" stroke-width="0.95"/><path d="M3.7 10.9 Q4.9 6.6 7.6 4.7 L11 8.1 Q8.7 10.1 3.7 10.9 Z" fill="#f0c95c" stroke="#a8822a" stroke-width="0.35"/><path d="M3.8 10.8 L7.4 7.3" stroke="#5a4310" stroke-width="0.6"/><circle cx="7.5" cy="7.3" r="0.75" fill="#3f2e0a"/><path d="M7.6 4.7 L10.9 1.3 Q12.6 0.5 13.5 1.4 Q14.2 2.6 13.5 3.9 L11 8.1 Z" fill="#1d3166"/><path d="M10.1 4.3 L12.2 2.1" stroke="#6484c4" stroke-width="0.8"/></svg>
<div class="cell" style="left:35.0px;width:32.30000000000001px;top:220.025px">11</div>
<div class="cell" style="left:67.30000000000001px;width:42.0px;top:220.025px">N/A</div>
<div class="cell" style="left:109.30000000000001px;width:33.30000000000001px;top:220.025px">N/A</div>
<div class="cell" style="left:142.60000000000002px;width:32.39999999999998px;top:220.025px">N/A</div>
<div class="cell" style="left:175.0px;width:69.79999999999995px;top:220.025px">N/A</div>
<div class="cell" style="left:244.79999999999995px;width:34.700000000000045px;top:220.025px">N/A</div>
<div class="cell" style="left:279.5px;width:35.299999999999955px;top:220.025px">N/A</div>
<svg class="abs" style="left:322px;top:217.33px" width="15" height="14" viewBox="0 0 15 14"><rect x="1.5" y="2.3" width="9.2" height="10.3" rx="0.8" fill="url(#eg)" stroke="#4a79a6" stroke-width="0.95"/><path d="M3.7 10.9 Q4.9 6.6 7.6 4.7 L11 8.1 Q8.7 10.1 3.7 10.9 Z" fill="#f0c95c" stroke="#a8822a" stroke-width="0.35"/><path d="M3.8 10.8 L7.4 7.3" stroke="#5a4310" stroke-width="0.6"/><circle cx="7.5" cy="7.3" r="0.75" fill="#3f2e0a"/><path d="M7.6 4.7 L10.9 1.3 Q12.6 0.5 13.5 1.4 Q14.2 2.6 13.5 3.9 L11 8.1 Z" fill="#1d3166"/><path d="M10.1 4.3 L12.2 2.1" stroke="#6484c4" stroke-width="0.8"/></svg>
<div class="cell" style="left:35.0px;width:32.30000000000001px;top:234.17499999999998px">12</div>
<div class="cell" style="left:67.30000000000001px;width:42.0px;top:234.17499999999998px">N/A</div>
<div class="cell" style="left:109.30000000000001px;width:33.30000000000001px;top:234.17499999999998px">N/A</div>
<div class="cell" style="left:142.60000000000002px;width:32.39999999999998px;top:234.17499999999998px">N/A</div>
<div class="cell" style="left:175.0px;width:69.79999999999995px;top:234.17499999999998px">N/A</div>
<div class="cell" style="left:244.79999999999995px;width:34.700000000000045px;top:234.17499999999998px">N/A</div>
<div class="cell" style="left:279.5px;width:35.299999999999955px;top:234.17499999999998px">N/A</div>
<svg class="abs" style="left:322px;top:231.47px" width="15" height="14" viewBox="0 0 15 14"><rect x="1.5" y="2.3" width="9.2" height="10.3" rx="0.8" fill="url(#eg)" stroke="#4a79a6" stroke-width="0.95"/><path d="M3.7 10.9 Q4.9 6.6 7.6 4.7 L11 8.1 Q8.7 10.1 3.7 10.9 Z" fill="#f0c95c" stroke="#a8822a" stroke-width="0.35"/><path d="M3.8 10.8 L7.4 7.3" stroke="#5a4310" stroke-width="0.6"/><circle cx="7.5" cy="7.3" r="0.75" fill="#3f2e0a"/><path d="M7.6 4.7 L10.9 1.3 Q12.6 0.5 13.5 1.4 Q14.2 2.6 13.5 3.9 L11 8.1 Z" fill="#1d3166"/><path d="M10.1 4.3 L12.2 2.1" stroke="#6484c4" stroke-width="0.8"/></svg>
<div class="cell" style="left:35.0px;width:32.30000000000001px;top:248.32499999999996px">13</div>
<div class="cell" style="left:67.30000000000001px;width:42.0px;top:248.32499999999996px">N/A</div>
<div class="cell" style="left:109.30000000000001px;width:33.30000000000001px;top:248.32499999999996px">N/A</div>
<div class="cell" style="left:142.60000000000002px;width:32.39999999999998px;top:248.32499999999996px">N/A</div>
<div class="cell" style="left:175.0px;width:69.79999999999995px;top:248.32499999999996px">N/A</div>
<div class="cell" style="left:244.79999999999995px;width:34.700000000000045px;top:248.32499999999996px">N/A</div>
<div class="cell" style="left:279.5px;width:35.299999999999955px;top:248.32499999999996px">N/A</div>
<svg class="abs" style="left:322px;top:245.62px" width="15" height="14" viewBox="0 0 15 14"><rect x="1.5" y="2.3" width="9.2" height="10.3" rx="0.8" fill="url(#eg)" stroke="#4a79a6" stroke-width="0.95"/><path d="M3.7 10.9 Q4.9 6.6 7.6 4.7 L11 8.1 Q8.7 10.1 3.7 10.9 Z" fill="#f0c95c" stroke="#a8822a" stroke-width="0.35"/><path d="M3.8 10.8 L7.4 7.3" stroke="#5a4310" stroke-width="0.6"/><circle cx="7.5" cy="7.3" r="0.75" fill="#3f2e0a"/><path d="M7.6 4.7 L10.9 1.3 Q12.6 0.5 13.5 1.4 Q14.2 2.6 13.5 3.9 L11 8.1 Z" fill="#1d3166"/><path d="M10.1 4.3 L12.2 2.1" stroke="#6484c4" stroke-width="0.8"/></svg>
<div class="cell" style="left:35.0px;width:32.30000000000001px;top:262.47499999999997px">14</div>
<div class="cell" style="left:67.30000000000001px;width:42.0px;top:262.47499999999997px">N/A</div>
<div class="cell" style="left:109.30000000000001px;width:33.30000000000001px;top:262.47499999999997px">N/A</div>
<div class="cell" style="left:142.60000000000002px;width:32.39999999999998px;top:262.47499999999997px">N/A</div>
<div class="cell" style="left:175.0px;width:69.79999999999995px;top:262.47499999999997px">N/A</div>
<div class="cell" style="left:244.79999999999995px;width:34.700000000000045px;top:262.47499999999997px">N/A</div>
<div class="cell" style="left:279.5px;width:35.299999999999955px;top:262.47499999999997px">N/A</div>
<svg class="abs" style="left:322px;top:259.77px" width="15" height="14" viewBox="0 0 15 14"><rect x="1.5" y="2.3" width="9.2" height="10.3" rx="0.8" fill="url(#eg)" stroke="#4a79a6" stroke-width="0.95"/><path d="M3.7 10.9 Q4.9 6.6 7.6 4.7 L11 8.1 Q8.7 10.1 3.7 10.9 Z" fill="#f0c95c" stroke="#a8822a" stroke-width="0.35"/><path d="M3.8 10.8 L7.4 7.3" stroke="#5a4310" stroke-width="0.6"/><circle cx="7.5" cy="7.3" r="0.75" fill="#3f2e0a"/><path d="M7.6 4.7 L10.9 1.3 Q12.6 0.5 13.5 1.4 Q14.2 2.6 13.5 3.9 L11 8.1 Z" fill="#1d3166"/><path d="M10.1 4.3 L12.2 2.1" stroke="#6484c4" stroke-width="0.8"/></svg>
<div class="cell" style="left:35.0px;width:32.30000000000001px;top:276.625px">15</div>
<div class="cell" style="left:67.30000000000001px;width:42.0px;top:276.625px">N/A</div>
<div class="cell" style="left:109.30000000000001px;width:33.30000000000001px;top:276.625px">N/A</div>
<div class="cell" style="left:142.60000000000002px;width:32.39999999999998px;top:276.625px">N/A</div>
<div class="cell" style="left:175.0px;width:69.79999999999995px;top:276.625px">N/A</div>
<div class="cell" style="left:244.79999999999995px;width:34.700000000000045px;top:276.625px">N/A</div>
<div class="cell" style="left:279.5px;width:35.299999999999955px;top:276.625px">N/A</div>
<svg class="abs" style="left:322px;top:273.92px" width="15" height="14" viewBox="0 0 15 14"><rect x="1.5" y="2.3" width="9.2" height="10.3" rx="0.8" fill="url(#eg)" stroke="#4a79a6" stroke-width="0.95"/><path d="M3.7 10.9 Q4.9 6.6 7.6 4.7 L11 8.1 Q8.7 10.1 3.7 10.9 Z" fill="#f0c95c" stroke="#a8822a" stroke-width="0.35"/><path d="M3.8 10.8 L7.4 7.3" stroke="#5a4310" stroke-width="0.6"/><circle cx="7.5" cy="7.3" r="0.75" fill="#3f2e0a"/><path d="M7.6 4.7 L10.9 1.3 Q12.6 0.5 13.5 1.4 Q14.2 2.6 13.5 3.9 L11 8.1 Z" fill="#1d3166"/><path d="M10.1 4.3 L12.2 2.1" stroke="#6484c4" stroke-width="0.8"/></svg>
</div>
<div class="abs" style="left:726px;top:255.5px;width:13px;height:234px;background:#f3f3f3"></div>
<div class="abs" style="left:727.6px;top:268.8px;width:9.9px;height:51.5px;background:#c1c1c1"></div>
<svg class="abs" style="left:729.3px;top:260.5px" width="6" height="4" viewBox="0 0 6 4"><path d="M0 3.6 L3 0.4 L6 3.6 Z" fill="#8a8a8a"/></svg>
<svg class="abs" style="left:729.3px;top:481.8px" width="6" height="4" viewBox="0 0 6 4"><path d="M0 0.3 L3 3.6 L6 0.3 Z" fill="#333"/></svg>
<div class="abs" style="left:182px;top:491px;width:125.2px;height:33px;background:#000"></div>
<div class="abs" style="left:307.2px;top:491px;width:471px;height:33px;background:#0a3d8c"></div>
<div class="btn" style="left:433.6px;top:501.6px;width:37.4px;height:12px;line-height:10px;font-size:8.2px;border-color:#cfcfcf;"><span style="position:relative;display:inline-block;transform:scaleY(1.12);top:0.9px">APPLY</span></div>
<div class="btn" style="left:475px;top:501.6px;width:34.4px;height:12px;line-height:10px;font-size:8.2px;border-color:#cfcfcf;"><span style="position:relative;display:inline-block;transform:scaleY(1.12);top:0.9px">BACK</span></div>
<div class="btn" style="left:513.6px;top:501.6px;width:45.4px;height:12px;line-height:10px;font-size:8.2px;border-color:#cfcfcf;"><span style="position:relative;display:inline-block;transform:scaleY(1.12);top:0.9px">CANCEL</span></div>
<div class="abs" style="left:779.8px;top:60px;width:10.4px;height:465px;background:#f3f3f3"></div>
<div class="abs" style="left:780.9px;top:73.6px;width:9.2px;height:407px;background:#c1c1c1"></div>
<svg class="abs" style="left:782.6px;top:65px" width="6" height="4" viewBox="0 0 6 4"><path d="M0 3.6 L3 0.4 L6 3.6 Z" fill="#8a8a8a"/></svg>
<svg class="abs" style="left:782.6px;top:518.3px" width="6" height="4" viewBox="0 0 6 4"><path d="M0 0.3 L3 3.6 L6 0.3 Z" fill="#333"/></svg>
<div class="frame"></div>
</div></body></html>
